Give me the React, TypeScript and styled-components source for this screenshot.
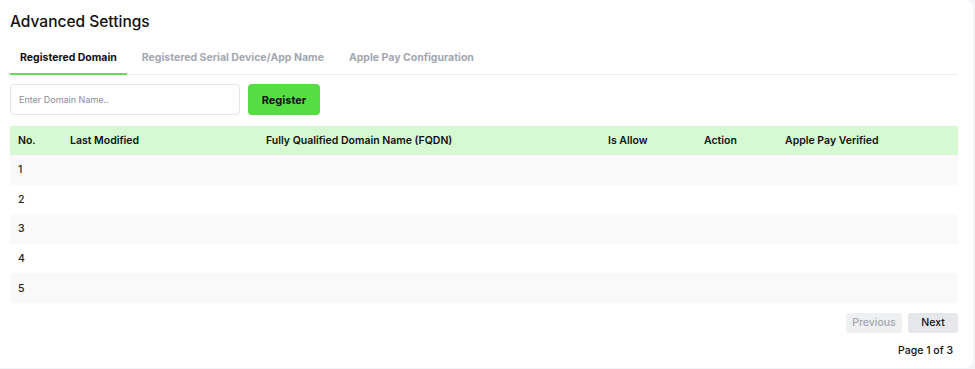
import React from "react";
import styled, { createGlobalStyle } from "styled-components";

const Global = createGlobalStyle`
  html, body { margin: 0; padding: 0; background: #f1f3f6; }
  body { font-family: "Inter", "Noto Sans", sans-serif; color: #111; }
  * { box-sizing: border-box; }
`;

const Card = styled.div`
  width: 973px;
  height: 368px;
  background: #fff;
  border-radius: 0 8px 8px 0;
  padding: 12px 15px 0 10px;
  display: flex;
  flex-direction: column;
`;

const Title = styled.h1`
  margin: 0;
  font-size: 15.5px;
  font-weight: 500;
  line-height: 20px;
  color: #111;
`;

const Tabs = styled.div`
  margin-top: 10px;
  width: 948px;
  display: flex;
  border-bottom: 1px solid #eceef1;
`;

const Tab = styled.div<{ $active?: boolean }>`
  padding: 0 10px;
  height: 33px;
  display: flex;
  align-items: center;
  justify-content: center;
  margin-right: 5px;
  font-size: 10.5px;
  font-weight: 700;
  color: ${(p) => (p.$active ? "#111" : "#a3a7b0")};
  border-bottom: 2px solid ${(p) => (p.$active ? "#66dd55" : "transparent")};
  margin-bottom: -1px;
`;

const FormRow = styled.div`
  display: flex;
  gap: 8px;
  margin-top: 9px;
  align-items: center;
`;

const Input = styled.input`
  width: 230px;
  height: 31px;
  border: 1px solid #e3e5e9;
  border-radius: 4px;
  padding: 0 8px;
  font-family: inherit;
  font-size: 9px;
  color: #333;
  outline: none;
  &::placeholder { color: #8a8e97; }
`;

const Button = styled.button`
  width: 72px;
  height: 31px;
  border: none;
  border-radius: 4px;
  background: #56dd44;
  font-family: inherit;
  font-size: 11px;
  font-weight: 700;
  color: #111;
`;

const Table = styled.div`
  margin-top: 11px;
  width: 948px;
  display: flex;
  flex-direction: column;
`;

const cols = "52px 196px 342px 96px 81px 1fr";

const HeadRow = styled.div`
  display: grid;
  grid-template-columns: ${cols};
  height: 29px;
  align-items: center;
  padding-left: 8px;
  background: #d6f8d2;
  font-size: 10.5px;
  font-weight: 600;
  color: #111;
`;

const Row = styled.div<{ $odd: boolean }>`
  display: grid;
  grid-template-columns: ${cols};
  height: 29.6px;
  align-items: center;
  padding-left: 8px;
  background: ${(p) => (p.$odd ? "#f9f9f9" : "#fff")};
  font-size: 10.5px;
  font-weight: 500;
  color: #222;
`;

const Pager = styled.div`
  margin-top: 10px;
  width: 948px;
  display: flex;
  justify-content: flex-end;
  gap: 6px;
`;

const PageBtn = styled.button<{ $disabled?: boolean }>`
  height: 20px;
  padding: 0;
  width: ${(p) => (p.$disabled ? "56px" : "50px")};
  border: none;
  border-radius: 3px;
  background: ${(p) => (p.$disabled ? "#eff0f2" : "#e6e7ea")};
  color: ${(p) => (p.$disabled ? "#a3a7b0" : "#111")};
  font-family: inherit;
  font-size: 10.5px;
  font-weight: 500;
`;

const PageInfo = styled.div`
  width: 943px;
  margin-top: 11px;
  text-align: right;
  font-size: 10.5px;
  font-weight: 500;
  color: #111;
`;

const headers = ["No.", "Last Modified", "Fully Qualified Domain Name (FQDN)", "Is Allow", "Action", "Apple Pay Verified"];

export default function App() {
  return (
    <>
      <Global />
      <Card>
        <Title>Advanced Settings</Title>
        <Tabs>
          <Tab $active>Registered Domain</Tab>
          <Tab>Registered Serial Device/App Name</Tab>
          <Tab>Apple Pay Configuration</Tab>
        </Tabs>
        <FormRow>
          <Input placeholder="Enter Domain Name.." />
          <Button>Register</Button>
        </FormRow>
        <Table>
          <HeadRow>
            {headers.map((h) => (
              <div key={h}>{h}</div>
            ))}
          </HeadRow>
          {[1, 2, 3, 4, 5].map((n) => (
            <Row key={n} $odd={n % 2 === 1}>
              <div>{n}</div>
              <div />
              <div />
              <div />
              <div />
              <div />
            </Row>
          ))}
        </Table>
        <Pager>
          <PageBtn $disabled>Previous</PageBtn>
          <PageBtn>Next</PageBtn>
        </Pager>
        <PageInfo>Page 1 of 3</PageInfo>
      </Card>
    </>
  );
}
